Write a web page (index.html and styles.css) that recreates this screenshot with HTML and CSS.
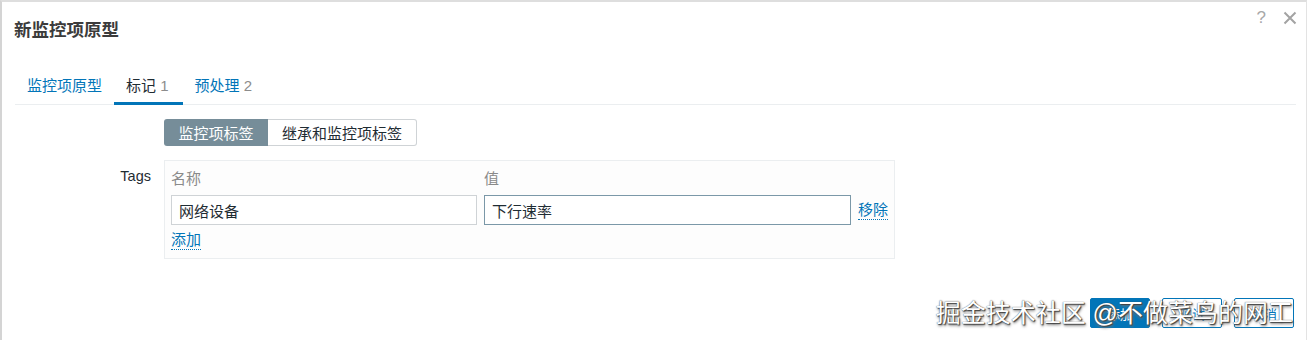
FILE: index.html
```html
<!DOCTYPE html>
<html lang="zh-CN">
<head>
  <meta charset="UTF-8">
  <title>新监控项原型</title>
  <link rel="stylesheet" href="styles.css">
</head>
<body>

  <div class="dialog">
    <!-- 标题 -->
    <div class="dialog-head">
      <h4 class="dialog-title">新监控项原型</h4>
      <div class="head-tools">
        <span class="help">?</span>
        <svg class="close" width="14" height="14" viewBox="0 0 14 14">
          <path d="M1.5 1.5 L12.5 12.5 M12.5 1.5 L1.5 12.5" stroke="#a3a3a3" stroke-width="2" fill="none"/>
        </svg>
      </div>
    </div>

    <!-- 标签页 -->
    <ul class="tabs">
      <li><a href="#">监控项原型</a></li>
      <li class="active"><a href="#">标记 <span class="count">1</span></a></li>
      <li><a href="#">预处理 <span class="count">2</span></a></li>
    </ul>

    <!-- 表单 -->
    <div class="form">
      <div class="form-row">
        <div class="form-label"></div>
        <div class="segmented">
          <span class="seg on">监控项标签</span>
          <span class="seg">继承和监控项标签</span>
        </div>
      </div>

      <div class="form-row">
        <div class="form-label tags-label">Tags</div>
        <div class="tags-box">
          <div class="tags-grid">
            <div class="col-head">名称</div>
            <div class="col-head">值</div>
            <div></div>
            <input type="text" class="tag-input" value="网络设备">
            <input type="text" class="tag-input focused" value="下行速率">
            <a href="#" class="link">移除</a>
          </div>
          <a href="#" class="link add">添加</a>
        </div>
      </div>
    </div>

    <!-- 按钮 -->
    <div class="footer">
      <button class="btn primary">添加</button>
      <button class="btn">测试</button>
      <button class="btn">取消</button>
      <div class="watermark">掘金技术社区 @不做菜鸟的网工</div>
    </div>
  </div>

</body>
</html>
```

FILE: styles.css
```css
* {
  box-sizing: border-box;
}

body {
  margin: 0;
  padding: 0;
  background-color: #fff;
  font-family: 'Liberation Sans', Arial, 'Noto Sans CJK SC', sans-serif;
  font-size: 15px;
  color: #1f2c33;
}

.dialog {
  position: relative;
  width: 1307px;
  height: 340px;
  border-top: 2px solid #dedede;
  border-left: 2px solid #d4d4d4;
  border-right: 1px solid #e3e3e3;
  background: #fff;
}

.dialog-head {
  display: flex;
  justify-content: space-between;
  height: 52px;
  padding: 0 9px 0 12px;
}

.dialog-title {
  margin: 0;
  align-self: center;
  font-size: 17.5px;
  font-weight: bold;
  color: #3b3b3b;
}

.head-tools {
  display: flex;
  align-items: center;
  gap: 17px;
  height: 32px;
}

.help {
  font-size: 17px;
  color: #a8a8a8;
}

.close {
  display: block;
}

/* 标签页 */
.tabs {
  display: flex;
  list-style: none;
  margin: 0 10px 0 13px;
  padding: 0;
  border-bottom: 1px solid #ebeef0;
}

.tabs li {
  margin-bottom: -1px;
  border-bottom: 3px solid transparent;
}

.tabs li.active {
  border-bottom-color: #0275b8;
}

.tabs a {
  display: block;
  padding: 23px 12px 7px;
  line-height: 18px;
  color: #0275b8;
  text-decoration: none;
}

.tabs li.active a {
  padding-right: 14px;
  color: #1f2c33;
}

.count {
  color: #8c8c8c;
}

/* 表单 */
.form {
  padding: 14px 0 0 13px;
}

.form-row {
  display: flex;
  gap: 13px;
  margin-bottom: 14px;
}

.form-label {
  width: 136px;
  flex-shrink: 0;
  text-align: right;
}

.tags-label {
  padding-top: 8px;
  font-size: 14.5px;
}

.segmented {
  display: flex;
  height: 27px;
}

.seg {
  display: flex;
  align-items: center;
  padding: 0 14px;
  border: 1px solid #cfd3d6;
  border-left: none;
  background: #fff;
}

.seg:last-child {
  border-radius: 0 3px 3px 0;
}

.seg.on {
  width: 104px;
  justify-content: center;
  border: none;
  border-radius: 3px 0 0 3px;
  background: #768d99;
  color: #fff;
}

.tags-box {
  width: 731px;
  padding: 9px 6px 8px;
  border: 1px solid #ebeef0;
  background: #fdfdfd;
}

.tags-grid {
  display: grid;
  grid-template-columns: 306px 367px auto;
  column-gap: 7px;
  row-gap: 7px;
  align-items: center;
}

.col-head {
  line-height: 18px;
  color: #8a8a8a;
}

.tag-input {
  height: 30px;
  padding: 0 7px;
  border: 1px solid #cfd3d6;
  font-family: inherit;
  font-size: 15px;
  color: #1f2c33;
  background: #fff;
  outline: none;
}

.tag-input.focused {
  border-color: #7b98a8;
}

.link {
  color: #0275b8;
  text-decoration: none;
  border-bottom: 1px dotted #0275b8;
  justify-self: start;
  line-height: 18px;
}

.add {
  display: inline-block;
  margin-top: 6px;
}

/* 按钮 */
.footer {
  position: relative;
  display: flex;
  justify-content: flex-end;
  gap: 12px;
  margin-top: 39px;
  padding-right: 12px;
}

.btn {
  width: 60px;
  height: 30px;
  border: 1px solid #0275b8;
  border-radius: 2px;
  background: #fff;
  color: #0275b8;
  font-family: inherit;
  font-size: 13px;
}

.btn.primary {
  background: #0275b8;
  color: #fff;
}

.watermark {
  position: absolute;
  right: 13px;
  top: 0;
  line-height: 30px;
  font-size: 25px;
  color: #fff;
  white-space: nowrap;
  text-shadow: 0 0 1px #333, 1px 1px 1px #444, 1px 2px 3px #777;
}
```
